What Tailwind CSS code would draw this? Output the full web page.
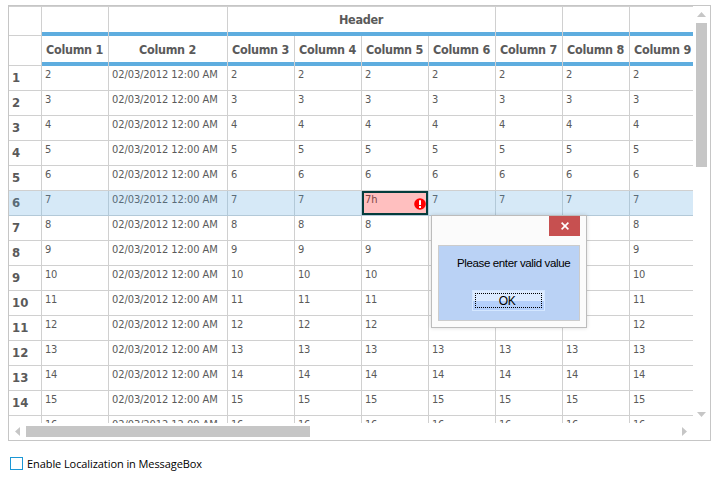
<!DOCTYPE html>
<html lang="en">
<head>
<meta charset="utf-8">
<title>Grid validation</title>
<script src="https://cdn.jsdelivr.net/npm/@tailwindcss/browser@4"></script>
</head>
<body class="bg-white w-[717px] h-[477px] overflow-hidden pl-2 pt-[5px] text-[#5a5a5a]">
<main class="relative">
  <section class="w-[703px] h-[436px] border border-[#c6c6c6] flex flex-col">
    <div class="flex h-[417px]">
      <div class="w-[684px] h-[417px] overflow-hidden border-t border-[#d0d0d0] font-['DejaVu_Sans_Condensed','DejaVu_Sans',sans-serif]">
        <div id="grid" class="w-[688px]"></div>
      </div>
      <div class="w-[17px] h-[417px] flex flex-col items-center pt-1.5">
        <svg class="w-[9px] h-[5px] shrink-0" viewBox="0 0 9 5"><path d="M4.5 0 9 5H0Z" fill="#c6c6c6"/></svg>
        <div class="mt-1.5 w-[11px] h-[144px] bg-[#c6c6c6]"></div>
        <svg class="mt-[245px] w-[9px] h-[5px] shrink-0" viewBox="0 0 9 5"><path d="M0 0H9L4.5 5Z" fill="#c6c6c6"/></svg>
      </div>
    </div>
    <div class="flex h-[17px] items-center pl-1.5">
      <svg class="w-[5px] h-[9px]" viewBox="0 0 5 9"><path d="M5 0V9L0 4.5Z" fill="#c6c6c6"/></svg>
      <div class="ml-1.5 w-[284px] h-[11px] bg-[#c6c6c6]"></div>
      <svg class="ml-[372px] w-[5px] h-[9px]" viewBox="0 0 5 9"><path d="M0 0V9L5 4.5Z" fill="#c6c6c6"/></svg>
    </div>
  </section>

  <label class="flex items-center pl-0.5 mt-4 h-[13px] text-black font-['Open_Sans','Noto_Sans',sans-serif] text-[11px] leading-[13px] whitespace-nowrap">
    <span class="w-[13px] h-[13px] border border-[#1c97d5] bg-white"></span>
    <span class="ml-1 tracking-[-0.08px]">Enable Localization in MessageBox</span>
  </label>

  <div role="dialog" class="absolute left-[423px] top-[210px] w-[156px] h-[113px] bg-[#fbfbfb] border border-[#bcbcbc] shadow-[0_0_4px_rgba(0,0,0,0.15)] text-black font-['Liberation_Sans',sans-serif] text-[12px]">
    <div class="flex justify-end pr-1.5 h-[20px]">
      <div class="w-[31px] h-[20px] bg-[#c75050] flex items-center justify-center">
        <svg class="w-[8px] h-[8px]" viewBox="0 0 8 8"><path d="M0.6 0.6 7.4 7.4M7.4 0.6 0.6 7.4" stroke="#fff" stroke-width="1.6"/></svg>
      </div>
    </div>
    <div class="ml-1.5 mt-[9px] w-[142px] h-[76px] bg-[#bad2f5] border border-[#cccccc] flex flex-col items-start">
      <div class="ml-[18px] mt-[10px] leading-[14px] whitespace-nowrap text-[11.5px] tracking-[-0.37px]">Please enter valid value</div>
      <div class="ml-[33px] mt-5 w-[73px] h-[21px] bg-linear-to-b from-[#dcebff] from-50% to-[#b5d0fb] to-55% border border-[#d4e7ff] p-0.5">
        <div class="h-full border border-dotted border-black flex items-center justify-center leading-none tracking-[-0.5px] pr-[3px]">OK</div>
      </div>
    </div>
  </div>
</main>
<script>
const widths = ['w-[33px]', 'w-[67px]', 'w-[119px]', 'w-[67px]', 'w-[67px]', 'w-[67px]', 'w-[67px]', 'w-[67px]', 'w-[67px]', 'w-[67px]'];
const corner = '<div class="w-[33px] shrink-0 border-r border-b border-[#d0d0d0]"></div>';
const head = 'shrink-0 border-r border-[#d0d0d0]';
const inner = 'border-b-4 border-[#5eaddf] h-full text-center font-bold text-[12.5px] whitespace-nowrap';
const headText = 'tracking-[-0.3px] pr-px';
let html = '<div class="flex h-[29px]">' + corner;
for (const [w, t] of [['w-[67px]', ''], ['w-[119px]', ''], ['w-[268px]', 'Header'], ['w-[67px]', ''], ['w-[67px]', ''], ['w-[67px]', '']])
  html += `<div class="${w} ${head}"><div class="${inner} leading-[25px] ${headText}">${t}</div></div>`;
html += '</div><div class="flex h-[30px]">' + corner;
for (let c = 1; c < 10; c++)
  html += `<div class="${widths[c]} ${head}"><div class="${inner} leading-[27px] ${headText}">Column ${c}</div></div>`;
html += '</div>';
const alert = '<svg class="absolute right-0 top-[5px] w-3 h-3" viewBox="0 0 12 12"><circle cx="6" cy="6" r="5.8" fill="#f00"/><path d="M5 2.3H7V7H5ZM5 8H7V10H5Z" fill="#fff"/></svg>';
for (let r = 1; r < 16; r++) {
  const sel = r === 6;
  const line = sel ? 'border-[#b3c9d8]' : 'border-[#d0d0d0]';
  html += `<div class="flex h-[25px] ${sel ? 'bg-[#d6e9f7] text-[#5a6c78]' : ''}">`;
  html += `<div class="w-[33px] shrink-0 border-r border-b ${line} pl-[3px] font-bold text-[13px] leading-[24px]">${r}</div>`;
  for (let c = 1; c < 10; c++) {
    const text = c === 2 ? '02/03/2012 12:00 AM' : r + 1;
    const tracking = c === 2 ? 'tracking-[-0.08px]' : 'tracking-[-0.2px]';
    const cell = `shrink-0 border-r border-b ${line} text-[11px] leading-[17px] whitespace-nowrap`;
    if (sel && c === 5)
      html += `<div class="${widths[c]} ${cell}"><div class="relative h-full bg-[#ffbfbf] border-2 border-[#043c3c] pl-px text-[#7c4444] leading-[13px]">7h${alert}</div></div>`;
    else
      html += `<div class="${widths[c]} ${cell} pl-[3px] ${tracking}">${text}</div>`;
  }
  html += '</div>';
}
document.getElementById('grid').innerHTML = html;
</script>
</body>
</html>
